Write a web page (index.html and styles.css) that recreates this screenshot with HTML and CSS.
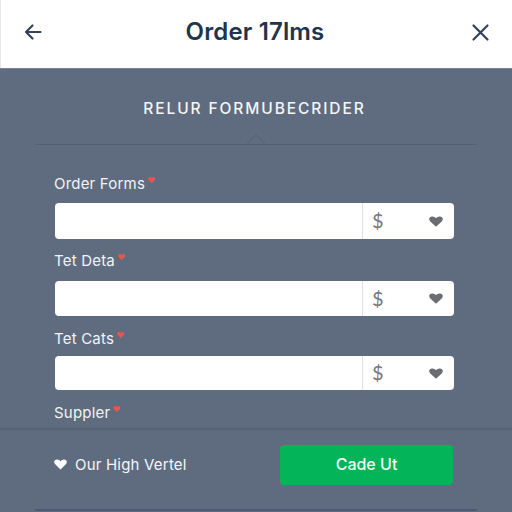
FILE: index.html
```html
<!DOCTYPE html>
<html lang="en">
<head>
<meta charset="utf-8">
<title>Order 17lms</title>
<link rel="stylesheet" href="styles.css">
</head>
<body>
<div class="app">
  <header class="topbar">
    <svg class="icon" viewBox="0 0 20 20" width="20" height="20"><path d="M17.500 10H3M9.500 3.500L3 10l6.500 6.500"/></svg>
    <h1 class="title">Order 17lms</h1>
    <svg class="icon" viewBox="0 0 20 20" width="20" height="20"><path d="M3.500 3.500l14 14M17.500 3.500l-14 14"/></svg>
  </header>
  <main class="panel">
    <h2 class="heading">RELUR FORMUBECRIDER</h2>
    <div class="divider">
      <svg class="caret" viewBox="0 0 20 10" width="20" height="10"><path d="M1 9.500L10 1l9 8.500"/></svg>
    </div>
    <form class="fields">
      <div class="field field-a">
        <div class="label">Order Forms<span class="req">♥</span></div>
        <div class="input">
          <div class="input-main"></div>
          <div class="input-side"><span class="dollar">$</span><svg class="chev" viewBox="0 0 14 11" width="14" height="11"><path d="M7 10.800L1 5.200C-.6 3.200.3.500 3.200.500 5 .500 6.200 1.200 7 2.300 7.800 1.200 9 .500 10.800.500 13.700.500 14.600 3.200 13 5.200z"/></svg></div>
        </div>
      </div>
      <div class="field field-b">
        <div class="label">Tet Deta<span class="req">♥</span></div>
        <div class="input">
          <div class="input-main"></div>
          <div class="input-side"><span class="dollar">$</span><svg class="chev" viewBox="0 0 14 11" width="14" height="11"><path d="M7 10.800L1 5.200C-.6 3.200.3.500 3.200.500 5 .500 6.200 1.200 7 2.300 7.800 1.200 9 .500 10.800.500 13.700.500 14.600 3.200 13 5.200z"/></svg></div>
        </div>
      </div>
      <div class="field field-c">
        <div class="label">Tet Cats<span class="req">♥</span></div>
        <div class="input">
          <div class="input-main"></div>
          <div class="input-side"><span class="dollar">$</span><svg class="chev" viewBox="0 0 14 11" width="14" height="11"><path d="M7 10.800L1 5.200C-.6 3.200.3.500 3.200.500 5 .500 6.200 1.200 7 2.300 7.800 1.200 9 .500 10.800.500 13.700.500 14.600 3.200 13 5.200z"/></svg></div>
        </div>
      </div>
      <div class="label label-last">Suppler<span class="req">♥</span></div>
    </form>
    <footer class="footer">
      <div class="note"><svg class="heart" viewBox="0 0 14 12" width="13" height="11"><path d="M7 11.500L1 5.500C-.8 3.200.3.500 3.200.500 5 .500 6.200 1.300 7 2.600 7.800 1.300 9 .500 10.800.500 13.700.500 14.800 3.200 13 5.500z"/></svg><span>Our High Vertel</span></div>
      <button class="cta" type="button">Cade Ut</button>
    </footer>
    <div class="endline"></div>
  </main>
</div>
</body>
</html>
```
FILE: styles.css
```css
* { box-sizing: border-box; }
html, body { margin: 0; padding: 0; }
body { width: 512px; height: 512px; overflow: hidden; font-family: "Inter", "Liberation Sans", sans-serif; background: #5f6c80; }
.app { width: 512px; height: 512px; display: flex; flex-direction: column; }
.topbar { height: 68px; flex: none; background: #fff; border-left: 1px solid #e4e6ea; display: flex; align-items: center; justify-content: space-between; padding: 0 22px 5px 22px; }
.icon { fill: none; stroke: #33435a; stroke-width: 2.200; stroke-linecap: round; stroke-linejoin: round; }
.title { margin: 0; font-size: 24px; line-height: 28px; font-weight: 600; letter-spacing: 0.150px; color: #22344c; padding-right: 3px; }
.panel { flex: 1; background: #5f6c80; border-top: 1px solid #788397; display: flex; flex-direction: column; }
.heading { margin: 30px 0 0; padding-right: 3px; height: 20px; line-height: 20px; text-align: center; font-size: 15.500px; font-weight: 500; letter-spacing: 1.900px; color: #f4f6f8; }
.divider { margin: 25px 35px 0; height: 1px; background: #535f75; position: relative; }
.caret { position: absolute; left: 211px; top: -10px; fill: #5f6c80; stroke: #535f75; stroke-width: 1; }
.fields { padding: 0 58px 0 54px; display: flex; flex-direction: column; height: 284px; }
.field { display: flex; flex-direction: column; }
.field-a { margin-top: 25px; }
.field-b { margin-top: 8px; }
.field-c { margin-top: 9px; }
.label { height: 20px; line-height: 20px; font-size: 15px; letter-spacing: 0.200px; color: #f1f3f5; }
.label-last { margin-top: 9px; }
.req { color: #e2574c; font-size: 8px; margin-left: 2px; vertical-align: 6px; }
.input { margin: 13px 0 0 1px; height: 36px; background: #fff; border-radius: 4px; display: flex; }
.field-b .input { margin-top: 14px; height: 35px; }
.field-c .input { margin-top: 11px; height: 34px; }
.input-main { flex: 1; }
.input-side { width: 92px; border-left: 1px solid #dcdfe3; display: flex; align-items: center; justify-content: space-between; padding: 0 11px 0 9px; }
.dollar { font-family: "Lato", "Liberation Sans", sans-serif; font-size: 20px; line-height: 20px; font-weight: 400; color: #777; padding-bottom: 2px; }
.chev { fill: #6b6d72; }
.footer { height: 81px; flex: none; margin-top: -1px; border-top: 2px solid #55627a; display: flex; align-items: flex-start; justify-content: space-between; padding: 15px 59px 0 54px; }
.note { display: flex; align-items: center; gap: 8px; height: 38px; font-size: 15px; letter-spacing: 0.200px; color: #f4f6f8; }
.heart { fill: #fff; }
.cta { width: 173px; height: 40px; border: 0; border-radius: 4px; background: #03b458; color: #f2fbf5; font: 500 16px "Inter", "Liberation Sans", sans-serif; padding: 0 0 2px; }
.endline { margin: 0 35px; height: 2px; background: #4d5a74; }
```
